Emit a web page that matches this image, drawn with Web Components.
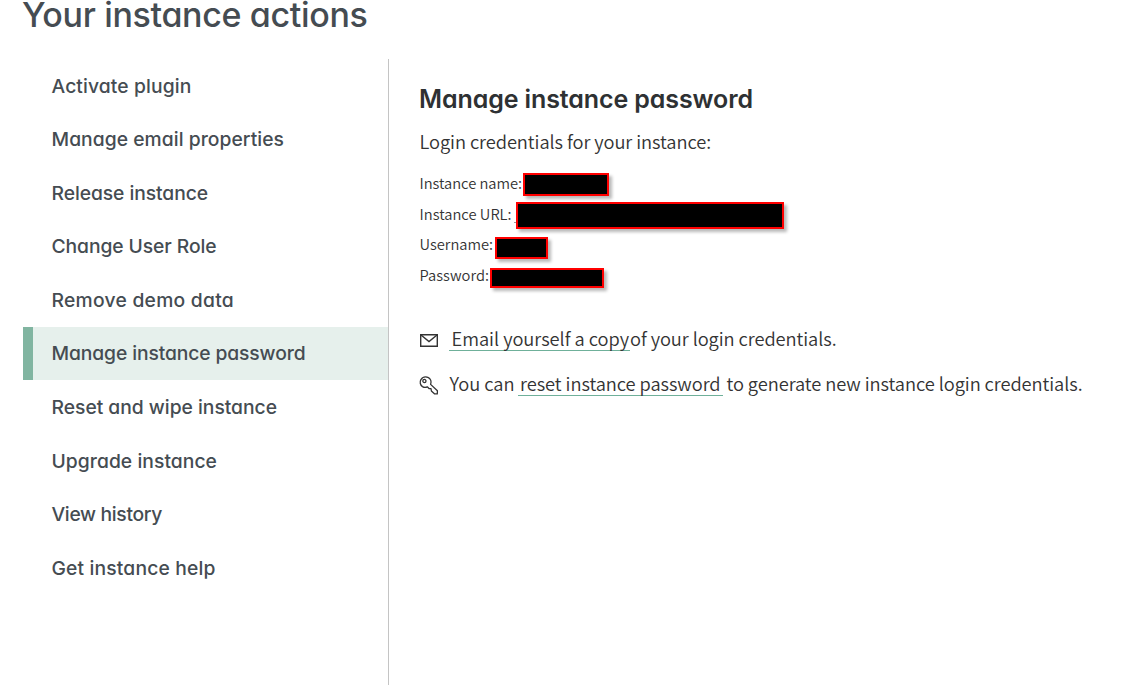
<!DOCTYPE html>
<html lang="en">
<head>
<meta charset="utf-8">
<title>Your instance actions</title>
<style>
  html, body { margin: 0; height: 100%; overflow: hidden; background: #fff; }
</style>
</head>
<body>
<instance-page></instance-page>

<script>
// Base class: renders the class's static template into an open shadow root.
class Base extends HTMLElement {
  constructor() {
    super();
    this.attachShadow({ mode: 'open' }).innerHTML = this.constructor.html;
  }
}

// Single line of text, tracked so that its advance equals the "width" attribute.
class FitText extends Base {
  static html = `<style>:host{display:inline-block;white-space:pre}span{display:inline-block}</style><span><slot></slot></span>`;
  connectedCallback() {
    const span = this.shadowRoot.querySelector('span');
    const target = parseFloat(this.getAttribute('width'));
    const natural = span.getBoundingClientRect().width;
    if (target && natural) span.style.letterSpacing = ((target - natural) / this.textContent.length).toFixed(3) + 'px';
  }
}

class NavItem extends Base {
  static html = `<style>
    :host{display:flex;align-items:center;box-sizing:border-box;height:53.55px;padding:0 0 0 18.5px;border-left:10px solid transparent;
      font:500 19.3px/24px Inter,sans-serif;font-feature-settings:"cv11";color:#454c52}
    :host([selected]){background:#e6f0ec;border-left-color:#81b5a1;height:53px;margin-bottom:.55px}
  </style><slot></slot>`;
}

class SideNav extends Base {
  static html = `<style>
    :host{display:block;box-sizing:border-box;width:366px;border-right:1px solid #c4c4c4}
  </style><slot></slot>`;
}

class RedactedBox extends Base {
  static html = `<style>
    :host{display:block;box-sizing:border-box;background:#000;border:2px solid #f00;box-shadow:3px 3px 3px rgba(0,0,0,.28)}
  </style>`;
  connectedCallback() {
    this.style.width = this.getAttribute('w') + 'px';
    this.style.height = this.getAttribute('h') + 'px';
  }
}

class CredentialRow extends Base {
  static html = `<style>
    :host{display:flex;align-items:flex-start;height:30.67px;font:350 14.7px/30.67px "Noto Sans CJK SC",sans-serif;color:#333}
    .label{flex:none;padding-top:1px;width:var(--label)}
  </style><div class="label"><slot></slot></div><slot name="value"></slot>`;
}

class ActionLine extends Base {
  static html = `<style>
    :host{display:flex;align-items:flex-start;height:45px;font:350 18.3px/24px "Noto Sans CJK SC",sans-serif;color:#333}
    .icon{width:30px;flex:none}
    ::slotted(svg){display:block}
  </style><div class="icon"><slot name="icon"></slot></div><slot></slot>`;
}

class TextLink extends Base {
  static html = `<style>
    :host{display:block;box-sizing:border-box;height:25px;border-bottom:1px solid #6fb09a}
  </style><slot></slot>`;
}

class InstancePage extends Base {
  static html = `<style>
    :host{display:flex;flex-direction:column;height:685px;overflow:hidden}
    h1{margin:0;height:59px;padding:1px 0 0 22px;box-sizing:border-box;font:500 34px/27px Inter,sans-serif;font-feature-settings:"cv11";color:#454c52}
    .body{display:flex;flex:1;padding-left:23px}
    main{padding:24px 0 0 30px}
    h2{margin:0;font:600 25px/32px Inter,sans-serif;font-feature-settings:"cv11";color:#2e3133}
    p{margin:14px 0 0;font:350 18.3px/24px "Noto Sans CJK SC",sans-serif;color:#333;padding-left:.5px}
    .creds{padding:14px 0 0 .5px}
    .actions{padding-top:36px}
    .stub{width:2px;height:1px;background:#999;margin:24px 0 0 2px}
  </style>
  <h1><fit-text width="345.5">Your instance actions</fit-text></h1>
  <div class="body">
    <side-nav>
      <nav-item><fit-text width="140">Activate plugin</fit-text></nav-item>
      <nav-item><fit-text width="232.5">Manage email properties</fit-text></nav-item>
      <nav-item><fit-text width="156.5">Release instance</fit-text></nav-item>
      <nav-item><fit-text width="165">Change User Role</fit-text></nav-item>
      <nav-item><fit-text width="182.5">Remove demo data</fit-text></nav-item>
      <nav-item selected><fit-text width="254">Manage instance password</fit-text></nav-item>
      <nav-item><fit-text width="225.5">Reset and wipe instance</fit-text></nav-item>
      <nav-item><fit-text width="165.5">Upgrade instance</fit-text></nav-item>
      <nav-item><fit-text width="110.5">View history</fit-text></nav-item>
      <nav-item><fit-text width="164">Get instance help</fit-text></nav-item>
    </side-nav>
    <main>
      <h2><fit-text width="334">Manage instance password</fit-text></h2>
      <p><fit-text width="291.5">Login credentials for your instance:</fit-text></p>
      <div class="creds">
        <credential-row style="--label:103px"><fit-text width="102.5">Instance name:</fit-text><redacted-box slot="value" w="86" h="23" style="margin-top:6px"></redacted-box></credential-row>
        <credential-row style="--label:92px"><fit-text width="92">Instance URL:</fit-text><span slot="value" class="stub"></span><redacted-box slot="value" w="268" h="27" style="margin-top:4.3px"></redacted-box></credential-row>
        <credential-row style="--label:75px"><fit-text width="73.5">Username:</fit-text><redacted-box slot="value" w="53" h="22" style="margin-top:8.7px"></redacted-box></credential-row>
        <credential-row style="--label:70px"><fit-text width="69.5">Password:</fit-text><redacted-box slot="value" w="114" h="20" style="margin-top:9px"></redacted-box></credential-row>
      </div>
      <div class="actions">
        <action-line>
          <svg slot="icon" width="20" height="24" viewBox="0 0 20 24" fill="none" stroke="#333" stroke-width="1.4"><path d="M1.7 8.7h16.6v11.6H1.7z"/><path d="M2 9l8 6.6L18 9"/></svg>
          <text-link style="padding:0 1px 0 2.5px"><fit-text width="177.5">Email yourself a copy</fit-text></text-link>
          <fit-text width="206.5">of your login credentials.</fit-text>
        </action-line>
        <action-line>
          <svg slot="icon" width="20" height="28" viewBox="0 0 20 28" fill="none" stroke="#333" stroke-width="1.3" stroke-linejoin="round"><path d="M11.6 13.4C12.8 10.5 11.6 7.3 8.9 6.3C6.5 5.4 3.4 6.2 1.9 8.6C.4 11.1 1.3 14.2 3.5 15.6C5 16.5 6.9 16.5 8.3 15.8L10 17.5L12 17.7L12.4 20L15.4 22.8L18.3 22.9L18.4 19.8Z"/><circle cx="5.4" cy="10" r="1.6"/></svg>
          <fit-text width="65" style="margin-left:.5px">You can</fit-text>
          <text-link style="margin-left:3px;padding:0 2px 0 2.5px"><fit-text width="200.5">reset instance password</fit-text></text-link>
          <fit-text width="356" style="margin-left:4px">to generate new instance login credentials.</fit-text>
        </action-line>
      </div>
    </main>
  </div>`;
}

customElements.define('fit-text', FitText);
customElements.define('nav-item', NavItem);
customElements.define('side-nav', SideNav);
customElements.define('redacted-box', RedactedBox);
customElements.define('credential-row', CredentialRow);
customElements.define('text-link', TextLink);
customElements.define('action-line', ActionLine);
customElements.define('instance-page', InstancePage);
</script>
</body>
</html>
